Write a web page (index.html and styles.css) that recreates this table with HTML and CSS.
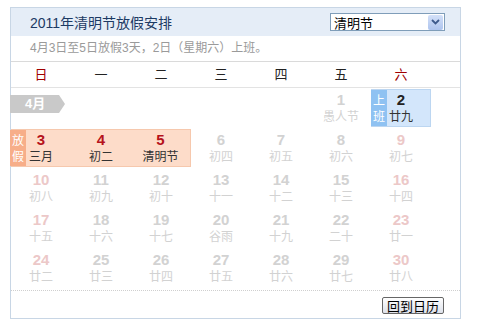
FILE: index.html
```html
<!DOCTYPE html>
<html lang="zh-CN">

<head>
    <meta charset="UTF-8">
    <title>2011年清明节放假安排</title>
    <link rel="stylesheet" href="styles.css">
</head>

<body>
    <div class="cal">
        <div class="cal-head">
            <h1>2011年清明节放假安排</h1>
            <div class="picker">
                <span>清明节</span>
                <span class="picker-btn">
                    <svg width="9" height="6" viewBox="0 0 9 6"><path d="M1 1 L4.5 4.5 L8 1" fill="none" stroke="#3d5a8c" stroke-width="1.8"/></svg>
                </span>
            </div>
        </div>
        <div class="cal-note">4月3日至5日放假3天，2日（星期六）上班。</div>

        <div class="week">
            <span class="red">日</span><span>一</span><span>二</span><span>三</span><span>四</span><span>五</span><span class="red">六</span>
        </div>

        <div class="days">
            <!-- first row: month tag + 1st and 2nd -->
            <div class="month"><span class="tag">4月</span></div>
            <div class="day"><b>1</b><i>愚人节</i></div>
            <div class="day work"><span class="mark">上班</span><b>2</b><i>廿九</i></div>

            <div class="day off"><span class="mark">放假</span><b>3</b><i>三月</i></div>
            <div class="day off"><b>4</b><i>初二</i></div>
            <div class="day off"><b>5</b><i>清明节</i></div>
            <div class="day"><b>6</b><i>初四</i></div>
            <div class="day"><b>7</b><i>初五</i></div>
            <div class="day"><b>8</b><i>初六</i></div>
            <div class="day weekend"><b>9</b><i>初七</i></div>

            <div class="day weekend"><b>10</b><i>初八</i></div>
            <div class="day"><b>11</b><i>初九</i></div>
            <div class="day"><b>12</b><i>初十</i></div>
            <div class="day"><b>13</b><i>十一</i></div>
            <div class="day"><b>14</b><i>十二</i></div>
            <div class="day"><b>15</b><i>十三</i></div>
            <div class="day weekend"><b>16</b><i>十四</i></div>

            <div class="day weekend"><b>17</b><i>十五</i></div>
            <div class="day"><b>18</b><i>十六</i></div>
            <div class="day"><b>19</b><i>十七</i></div>
            <div class="day"><b>20</b><i>谷雨</i></div>
            <div class="day"><b>21</b><i>十九</i></div>
            <div class="day"><b>22</b><i>二十</i></div>
            <div class="day weekend"><b>23</b><i>廿一</i></div>

            <div class="day weekend"><b>24</b><i>廿二</i></div>
            <div class="day"><b>25</b><i>廿三</i></div>
            <div class="day"><b>26</b><i>廿四</i></div>
            <div class="day"><b>27</b><i>廿五</i></div>
            <div class="day"><b>28</b><i>廿六</i></div>
            <div class="day"><b>29</b><i>廿七</i></div>
            <div class="day weekend"><b>30</b><i>廿八</i></div>
        </div>

        <div class="cal-foot">
            <button>回到日历</button>
        </div>
    </div>
</body>

</html>
```

FILE: styles.css
```css
/* Page */

body {
    margin: 0;
    padding: 0;
    background: #fff;
    font-family: "Liberation Sans", "Noto Sans CJK SC", sans-serif;
    color: #333;
}
/* Calendar box */

.cal {
    margin: 7px 0 0 10px;
    width: 449px;
    border: 1px solid #c8d6e5;
}

.cal-head {
    height: 28px;
    background: #e5edf7;
    display: flex;
    align-items: center;
    justify-content: space-between;
    padding: 0 15px 0 19px;
}

.cal-head h1 {
    margin: 0;
    font-size: 14px;
    font-weight: normal;
    color: #1c3a64;
}
/* Holiday picker */

.picker {
    width: 110px;
    height: 16px;
    border: 1px solid #7f9db9;
    background: #fff;
    display: flex;
    align-items: center;
    justify-content: space-between;
    font-size: 13px;
    color: #000;
    padding-left: 3px;
}

.picker-btn {
    width: 15px;
    height: 15px;
    margin-right: 1px;
    background: linear-gradient(#d3e0f8, #aec4ee);
    border-radius: 2px;
    display: flex;
    align-items: center;
    justify-content: center;
}

.cal-note {
    height: 25px;
    line-height: 25px;
    padding-left: 19px;
    font-size: 12px;
    color: #9a9a9a;
    border-bottom: 1px solid #dadada;
}
/* Week header */

.week {
    display: grid;
    grid-template-columns: repeat(7, 60px);
    height: 25px;
    line-height: 25px;
    font-size: 13px;
    text-align: center;
    color: #222;
    border-bottom: 1px solid #e3e3e3;
}

.week .red {
    color: #a00000;
}
/* Day grid */

.days {
    display: grid;
    grid-template-columns: repeat(7, 60px);
    grid-auto-rows: 38px;
    row-gap: 2px;
    padding: 1px 0 3px;
}

.month {
    grid-column: 1 / 6;
    padding-top: 5px;
}

.tag {
    display: inline-block;
    width: 40px;
    height: 18px;
    line-height: 18px;
    margin-left: -1px;
    padding-left: 15px;
    background: #c9c9c9;
    color: #fff;
    font-size: 13px;
    font-weight: bold;
    clip-path: polygon(0 0, calc(100% - 6px) 0, 100% 50%, calc(100% - 6px) 100%, 0 100%);
}

.day {
    position: relative;
    text-align: center;
    padding-top: 2px;
    color: #d2d2d2;
}

.day b {
    display: block;
    font-size: 15px;
    line-height: 17px;
}

.day i {
    display: block;
    font-style: normal;
    font-size: 12px;
    line-height: 16px;
    margin-top: 1px;
}

.day.weekend b {
    color: #ecc8c8;
}

.day.off {
    background: #fddcc9;
    border-top: 1px solid #f6c8ad;
    border-bottom: 1px solid #f6c8ad;
    padding-top: 1px;
}

.day.off:nth-child(6) {
    border-right: 1px solid #f6c8ad;
}

.day.off b {
    color: #b5121b;
}

.day.off i {
    color: #333;
}

.day.work {
    background: #d3e6fb;
    border: 1px solid #bcd6f1;
    padding-top: 1px;
}

.day.work b {
    color: #222;
}

.day.work i {
    color: #333;
}

.mark {
    position: absolute;
    left: -1px;
    top: 0;
    bottom: 0;
    width: 16px;
    font-size: 12px;
    line-height: 16px;
    padding-top: 3px;
    color: #fff;
    box-sizing: border-box;
}

.day.off .mark {
    background: #f7ae89;
}

.day.work .mark {
    background: #8fc2f2;
}
/* Footer */

.cal-foot {
    border-top: 1px dotted #cfcfcf;
    height: 28px;
    display: flex;
    justify-content: flex-end;
    align-items: flex-start;
    padding: 6px 16px 0 0;
    box-sizing: border-box;
}

button {
    width: 62px;
    height: 17px;
    padding: 0;
    font-family: "Noto Sans CJK SC", sans-serif;
    font-size: 13px;
    line-height: 15px;
    color: #000;
    border: 1px solid #666;
    border-radius: 2px;
    background: linear-gradient(#ffffff, #dde1ea);
}
```
